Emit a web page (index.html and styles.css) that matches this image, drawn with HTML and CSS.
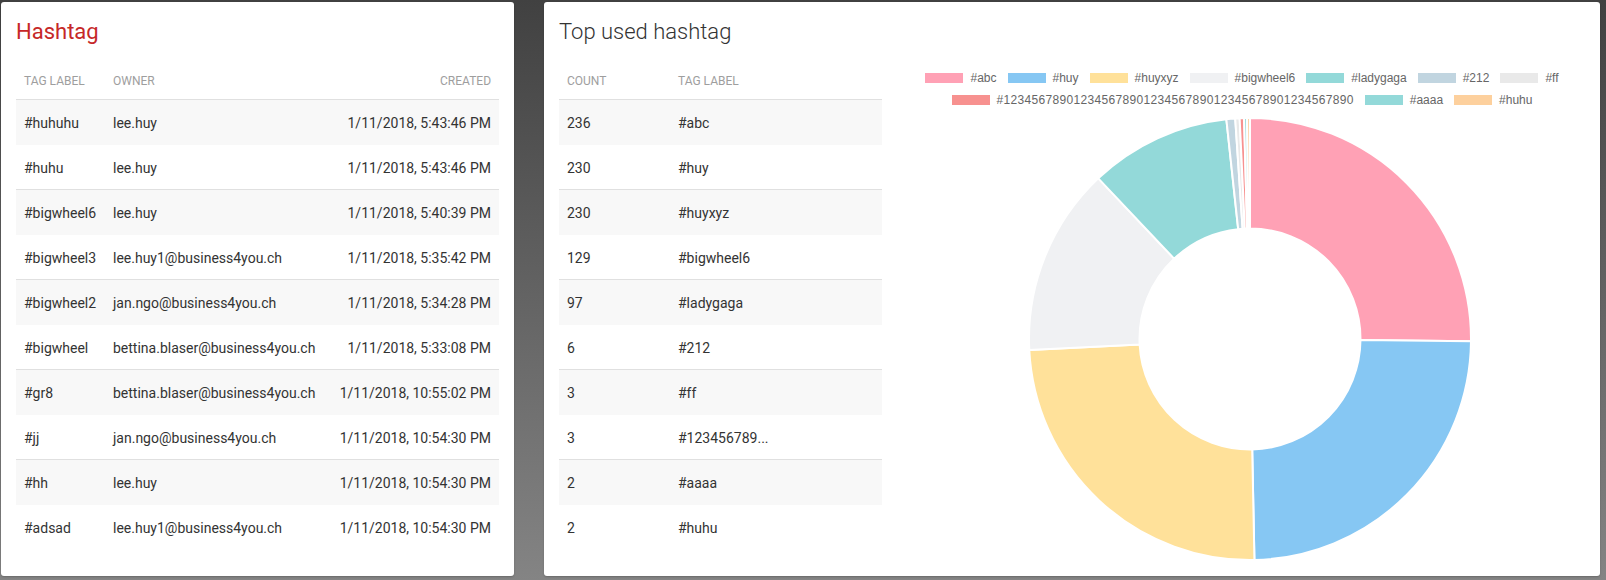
FILE: index.html
```html
<!DOCTYPE html>
<html lang="en">
<head>
<meta charset="utf-8">
<title>Hashtag dashboard</title>
<link rel="stylesheet" href="styles.css">
</head>
<body>
<div class="page">
  <section class="card card-left">
    <h2 class="title title-red">Hashtag</h2>
    <table class="tbl">
      <colgroup><col class="c-tag"><col><col class="c-date"></colgroup>
      <thead>
        <tr><th>Tag label</th><th>Owner</th><th class="right">Created</th></tr>
      </thead>
      <tbody>
        <tr><td>#huhuhu</td><td>lee.huy</td><td class="right">1/11/2018, 5:43:46 PM</td></tr>
        <tr><td>#huhu</td><td>lee.huy</td><td class="right">1/11/2018, 5:43:46 PM</td></tr>
        <tr><td>#bigwheel6</td><td>lee.huy</td><td class="right">1/11/2018, 5:40:39 PM</td></tr>
        <tr><td>#bigwheel3</td><td>lee.huy1@business4you.ch</td><td class="right">1/11/2018, 5:35:42 PM</td></tr>
        <tr><td>#bigwheel2</td><td>jan.ngo@business4you.ch</td><td class="right">1/11/2018, 5:34:28 PM</td></tr>
        <tr><td>#bigwheel</td><td>bettina.blaser@business4you.ch</td><td class="right">1/11/2018, 5:33:08 PM</td></tr>
        <tr><td>#gr8</td><td>bettina.blaser@business4you.ch</td><td class="right">1/11/2018, 10:55:02 PM</td></tr>
        <tr><td>#jj</td><td>jan.ngo@business4you.ch</td><td class="right">1/11/2018, 10:54:30 PM</td></tr>
        <tr><td>#hh</td><td>lee.huy</td><td class="right">1/11/2018, 10:54:30 PM</td></tr>
        <tr><td>#adsad</td><td>lee.huy1@business4you.ch</td><td class="right">1/11/2018, 10:54:30 PM</td></tr>
      </tbody>
    </table>
  </section>

  <section class="card card-right">
    <h2 class="title title-light">Top used hashtag</h2>
    <div class="split">
      <table class="tbl tbl-top">
        <colgroup><col class="c-count"><col></colgroup>
        <thead>
          <tr><th>Count</th><th>Tag label</th></tr>
        </thead>
        <tbody>
          <tr><td>236</td><td>#abc</td></tr>
          <tr><td>230</td><td>#huy</td></tr>
          <tr><td>230</td><td>#huyxyz</td></tr>
          <tr><td>129</td><td>#bigwheel6</td></tr>
          <tr><td>97</td><td>#ladygaga</td></tr>
          <tr><td>6</td><td>#212</td></tr>
          <tr><td>3</td><td>#ff</td></tr>
          <tr><td>3</td><td>#123456789...</td></tr>
          <tr><td>2</td><td>#aaaa</td></tr>
          <tr><td>2</td><td>#huhu</td></tr>
        </tbody>
      </table>

      <div class="chart">
        <div class="legend">
          <div class="legend-row">
            <span class="item"><i class="box c1"></i>#abc</span>
            <span class="item"><i class="box c2"></i>#huy</span>
            <span class="item"><i class="box c3"></i>#huyxyz</span>
            <span class="item"><i class="box c4"></i>#bigwheel6</span>
            <span class="item"><i class="box c5"></i>#ladygaga</span>
            <span class="item"><i class="box c6"></i>#212</span>
            <span class="item"><i class="box c7"></i>#ff</span>
          </div>
          <div class="legend-row">
            <span class="item digits"><i class="box c8"></i>#12345678901234567890123456789012345678901234567890</span>
            <span class="item"><i class="box c9"></i>#aaaa</span>
            <span class="item"><i class="box c10"></i>#huhu</span>
          </div>
        </div>
        <svg class="donut" width="444" height="444" viewBox="0 0 444 444">
          <g stroke="#fff" stroke-width="2" stroke-linejoin="round">
            <path fill="#ffa1b5" d="M222 1 A221 221 0 0 1 442.99 224.22 L332.49 223.11 A110.5 110.5 0 0 0 222 111.5 Z"/>
            <path fill="#86c7f3" d="M442.99 224.22 A221 221 0 0 1 226.44 442.96 L224.22 332.48 A110.5 110.5 0 0 0 332.49 223.11 Z"/>
            <path fill="#ffe19a" d="M226.44 442.96 A221 221 0 0 1 1.28 233.10 L111.64 227.55 A110.5 110.5 0 0 0 224.22 332.48 Z"/>
            <path fill="#f0f1f3" d="M1.28 233.10 A221 221 0 0 1 70.26 61.34 L146.12 141.67 A110.5 110.5 0 0 0 111.64 227.55 Z"/>
            <path fill="#93d9d9" d="M70.26 61.34 A221 221 0 0 1 198.36 2.27 L210.18 112.13 A110.5 110.5 0 0 0 146.12 141.67 Z"/>
            <path fill="#c1d5e0" d="M198.36 2.27 A221 221 0 0 1 207.21 1.49 L214.60 111.75 A110.5 110.5 0 0 0 210.18 112.13 Z"/>
            <path fill="#e9e9e9" d="M207.21 1.49 A221 221 0 0 1 211.64 1.24 L216.82 111.62 A110.5 110.5 0 0 0 214.60 111.75 Z"/>
            <path fill="#f7918f" d="M211.64 1.24 A221 221 0 0 1 216.08 1.08 L219.04 111.54 A110.5 110.5 0 0 0 216.82 111.62 Z"/>
            <path fill="#93d9d9" d="M216.08 1.08 A221 221 0 0 1 219.04 1.02 L220.52 111.51 A110.5 110.5 0 0 0 219.04 111.54 Z"/>
            <path fill="#fdd09d" d="M219.04 1.02 A221 221 0 0 1 222 1 L222 111.5 A110.5 110.5 0 0 0 220.52 111.51 Z"/>
          </g>
        </svg>
      </div>
    </div>
  </section>
</div>
</body>
</html>
```

FILE: styles.css
```css
* { box-sizing: border-box; }

html, body {
  margin: 0;
  height: 100%;
}

body {
  background: linear-gradient(#414141, #848484);
  font-family: Roboto, "Liberation Sans", sans-serif;
  color: rgba(0, 0, 0, 0.87);
}

.page {
  display: flex;
  gap: 30px;
  height: 580px;
  padding: 2px 6px 4px 1px;
}

.card {
  background: #fff;
  border-radius: 3px;
  padding: 16px 15px;
  box-shadow: 0 1px 2px rgba(0, 0, 0, 0.2);
}

.card-left { width: 513px; flex: none; }
.card-right { flex: 1; min-width: 0; }

.title {
  margin: 0 0 16px;
  font-size: 22px;
  line-height: 28px;
  font-weight: 400;
  color: #333;
}
.title-red { color: #c62828; }
.title-light { font-weight: 300; color: #333; }

.tbl {
  width: 100%;
  border-collapse: separate;
  border-spacing: 0;
  table-layout: fixed;
  font-size: 14px;
}
.tbl th {
  height: 38px;
  padding: 1px 8px 0;
  font-size: 12px;
  font-weight: 400;
  color: #9e9e9e;
  text-transform: uppercase;
  text-align: left;
  vertical-align: middle;
  border-bottom: 1px solid #e0e0e0;
}
.tbl td {
  height: 45px;
  padding: 0 8px;
  vertical-align: middle;
  white-space: nowrap;
  color: #333;
}
.tbl tbody tr:nth-child(odd) td { background: #f8f8f8; }
.tbl tbody tr:nth-child(even):not(:last-child) td { box-shadow: inset 0 -1px 0 #e0e0e0; }
.tbl .right { text-align: right; }

.c-tag { width: 89px; }
.c-date { width: 170px; }
.c-count { width: 111px; }

.split {
  display: flex;
  align-items: flex-start;
}
.tbl-top { width: 323px; flex: none; }

.chart {
  flex: 1;
  margin-left: 33px;
  padding-top: 10px;
  display: flex;
  flex-direction: column;
  align-items: center;
}

.legend {
  display: flex;
  flex-direction: column;
  gap: 10px;
  font-family: "Liberation Sans", Arial, sans-serif;
  font-size: 12px;
  line-height: 12px;
  color: #666;
}
.legend-row {
  display: flex;
  justify-content: center;
  gap: 10px;
  padding-right: 17px;
}
.item {
  display: flex;
  align-items: center;
  gap: 6px;
  white-space: nowrap;
}
.digits { letter-spacing: 0.33px; }
.box {
  display: block;
  width: 40px;
  height: 12px;
  box-shadow: inset 0 0 0 1px #fff;
}
.c1 { background: #ffa1b5; }
.c2 { background: #86c7f3; }
.c3 { background: #ffe19a; }
.c4 { background: #f0f1f3; }
.c5 { background: #93d9d9; }
.c6 { background: #c1d5e0; }
.c7 { background: #e9e9e9; }
.c8 { background: #f7918f; }
.c9 { background: #93d9d9; }
.c10 { background: #fdd09d; }

.donut {
  display: block;
  margin-top: 11px;
}
```
